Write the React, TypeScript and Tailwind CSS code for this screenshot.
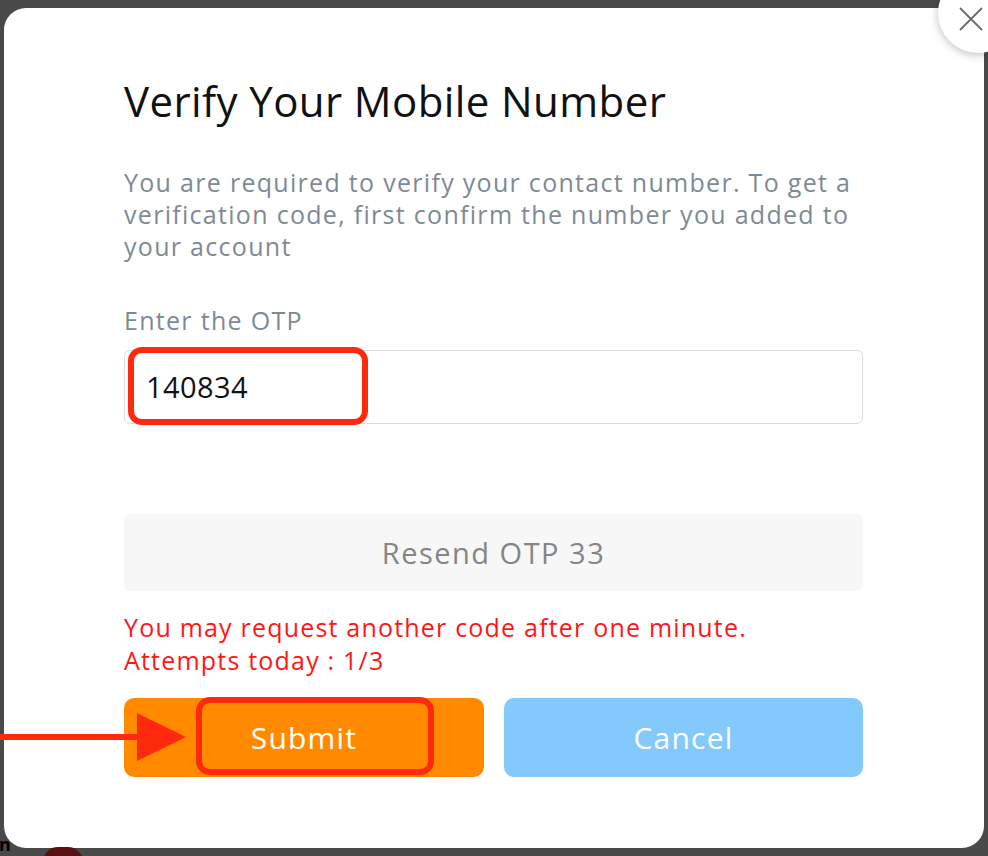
import React from "react";

export default function App() {
  const font = { fontFamily: "'Open Sans', 'Noto Sans', sans-serif" };
  return (
    <div className="relative h-[856px] w-[988px] overflow-hidden bg-[#494949] pt-[8px] pl-[4px] pr-[4px]" style={font}>
      <div className="flex h-[840px] w-[980px] flex-col rounded-[22px] bg-white pl-[120px] pr-[121px] pt-[67px]">
        <h1 className="text-[42px] leading-[52px] tracking-[0.4px] text-[#111111] font-normal">Verify Your Mobile Number</h1>
        <p className="mt-[39px] text-[25px] leading-[32px] tracking-[1.3px] text-[#7d8a96]">
          You are required to verify your contact number. To get a verification code, first confirm the number you added to your account
        </p>
        <div className="mt-[42px] text-[25px] leading-[32px] tracking-[1.3px] text-[#7d8a96]">Enter the OTP</div>
        <div className="relative mt-[14px] flex h-[74px] items-center rounded-[6px] border border-[#dcdcdc] pl-[21px] text-[29px] tracking-[0.4px] text-[#111111]">
          140834
          <div className="absolute left-[3px] top-[-4px] h-[78px] w-[240px] rounded-[14px] border-[6px] border-[#ff2a0e]" />
        </div>
        <div className="mt-[90px] flex h-[77px] items-center justify-center rounded-[6px] bg-[#f7f7f8] text-[29px] tracking-[1.5px] text-[#858585]">
          Resend OTP 33
        </div>
        <div className="mt-[20px] text-[25px] leading-[33px] tracking-[1.2px] text-[#ff1616]">
          <div>You may request another code after one minute.</div>
          <div>Attempts today : 1/3</div>
        </div>
        <div className="mt-[21px] flex gap-[20px]">
          <div className="relative flex h-[79px] w-[360px] items-center justify-center rounded-[10px] bg-[#ff8a00] text-[30px] tracking-[1.2px] text-white">
            Submit
            <div className="absolute left-[72px] top-[-1px] h-[78px] w-[238px] rounded-[14px] border-[6px] border-[#ff2a0e]" />
          </div>
          <div className="flex h-[79px] w-[359px] items-center justify-center rounded-[10px] bg-[#84c9fc] text-[30px] tracking-[1.2px] text-white">
            Cancel
          </div>
        </div>
      </div>
      {/* arrow */}
      <svg className="absolute left-0 top-[710px]" width="190" height="54" viewBox="0 0 190 54">
        <rect x="0" y="24" width="142" height="6" fill="#ff2a0e" />
        <polygon points="137,3 186,27 137,51" fill="#ff2a0e" />
      </svg>
      {/* close button */}
      <div className="absolute left-[938px] top-[-27px] h-[80px] w-[80px] rounded-full bg-white shadow-[0_2px_8px_rgba(0,0,0,0.25)]">
        <svg className="absolute left-[21px] top-[34px]" width="24" height="24" viewBox="0 0 24 24">
          <path d="M1 1 L23 23 M23 1 L1 23" stroke="#6a6a6a" strokeWidth="1.8" />
        </svg>
      </div>
      {/* bottom-left fragments */}
      <div className="absolute left-[43px] top-[847px] h-[30px] w-[40px] rounded-full bg-[#5a0f10]" />
      <div className="absolute left-[-1px] top-[834px] text-[18px] leading-[20px] font-bold text-black">n</div>
    </div>
  );
}
